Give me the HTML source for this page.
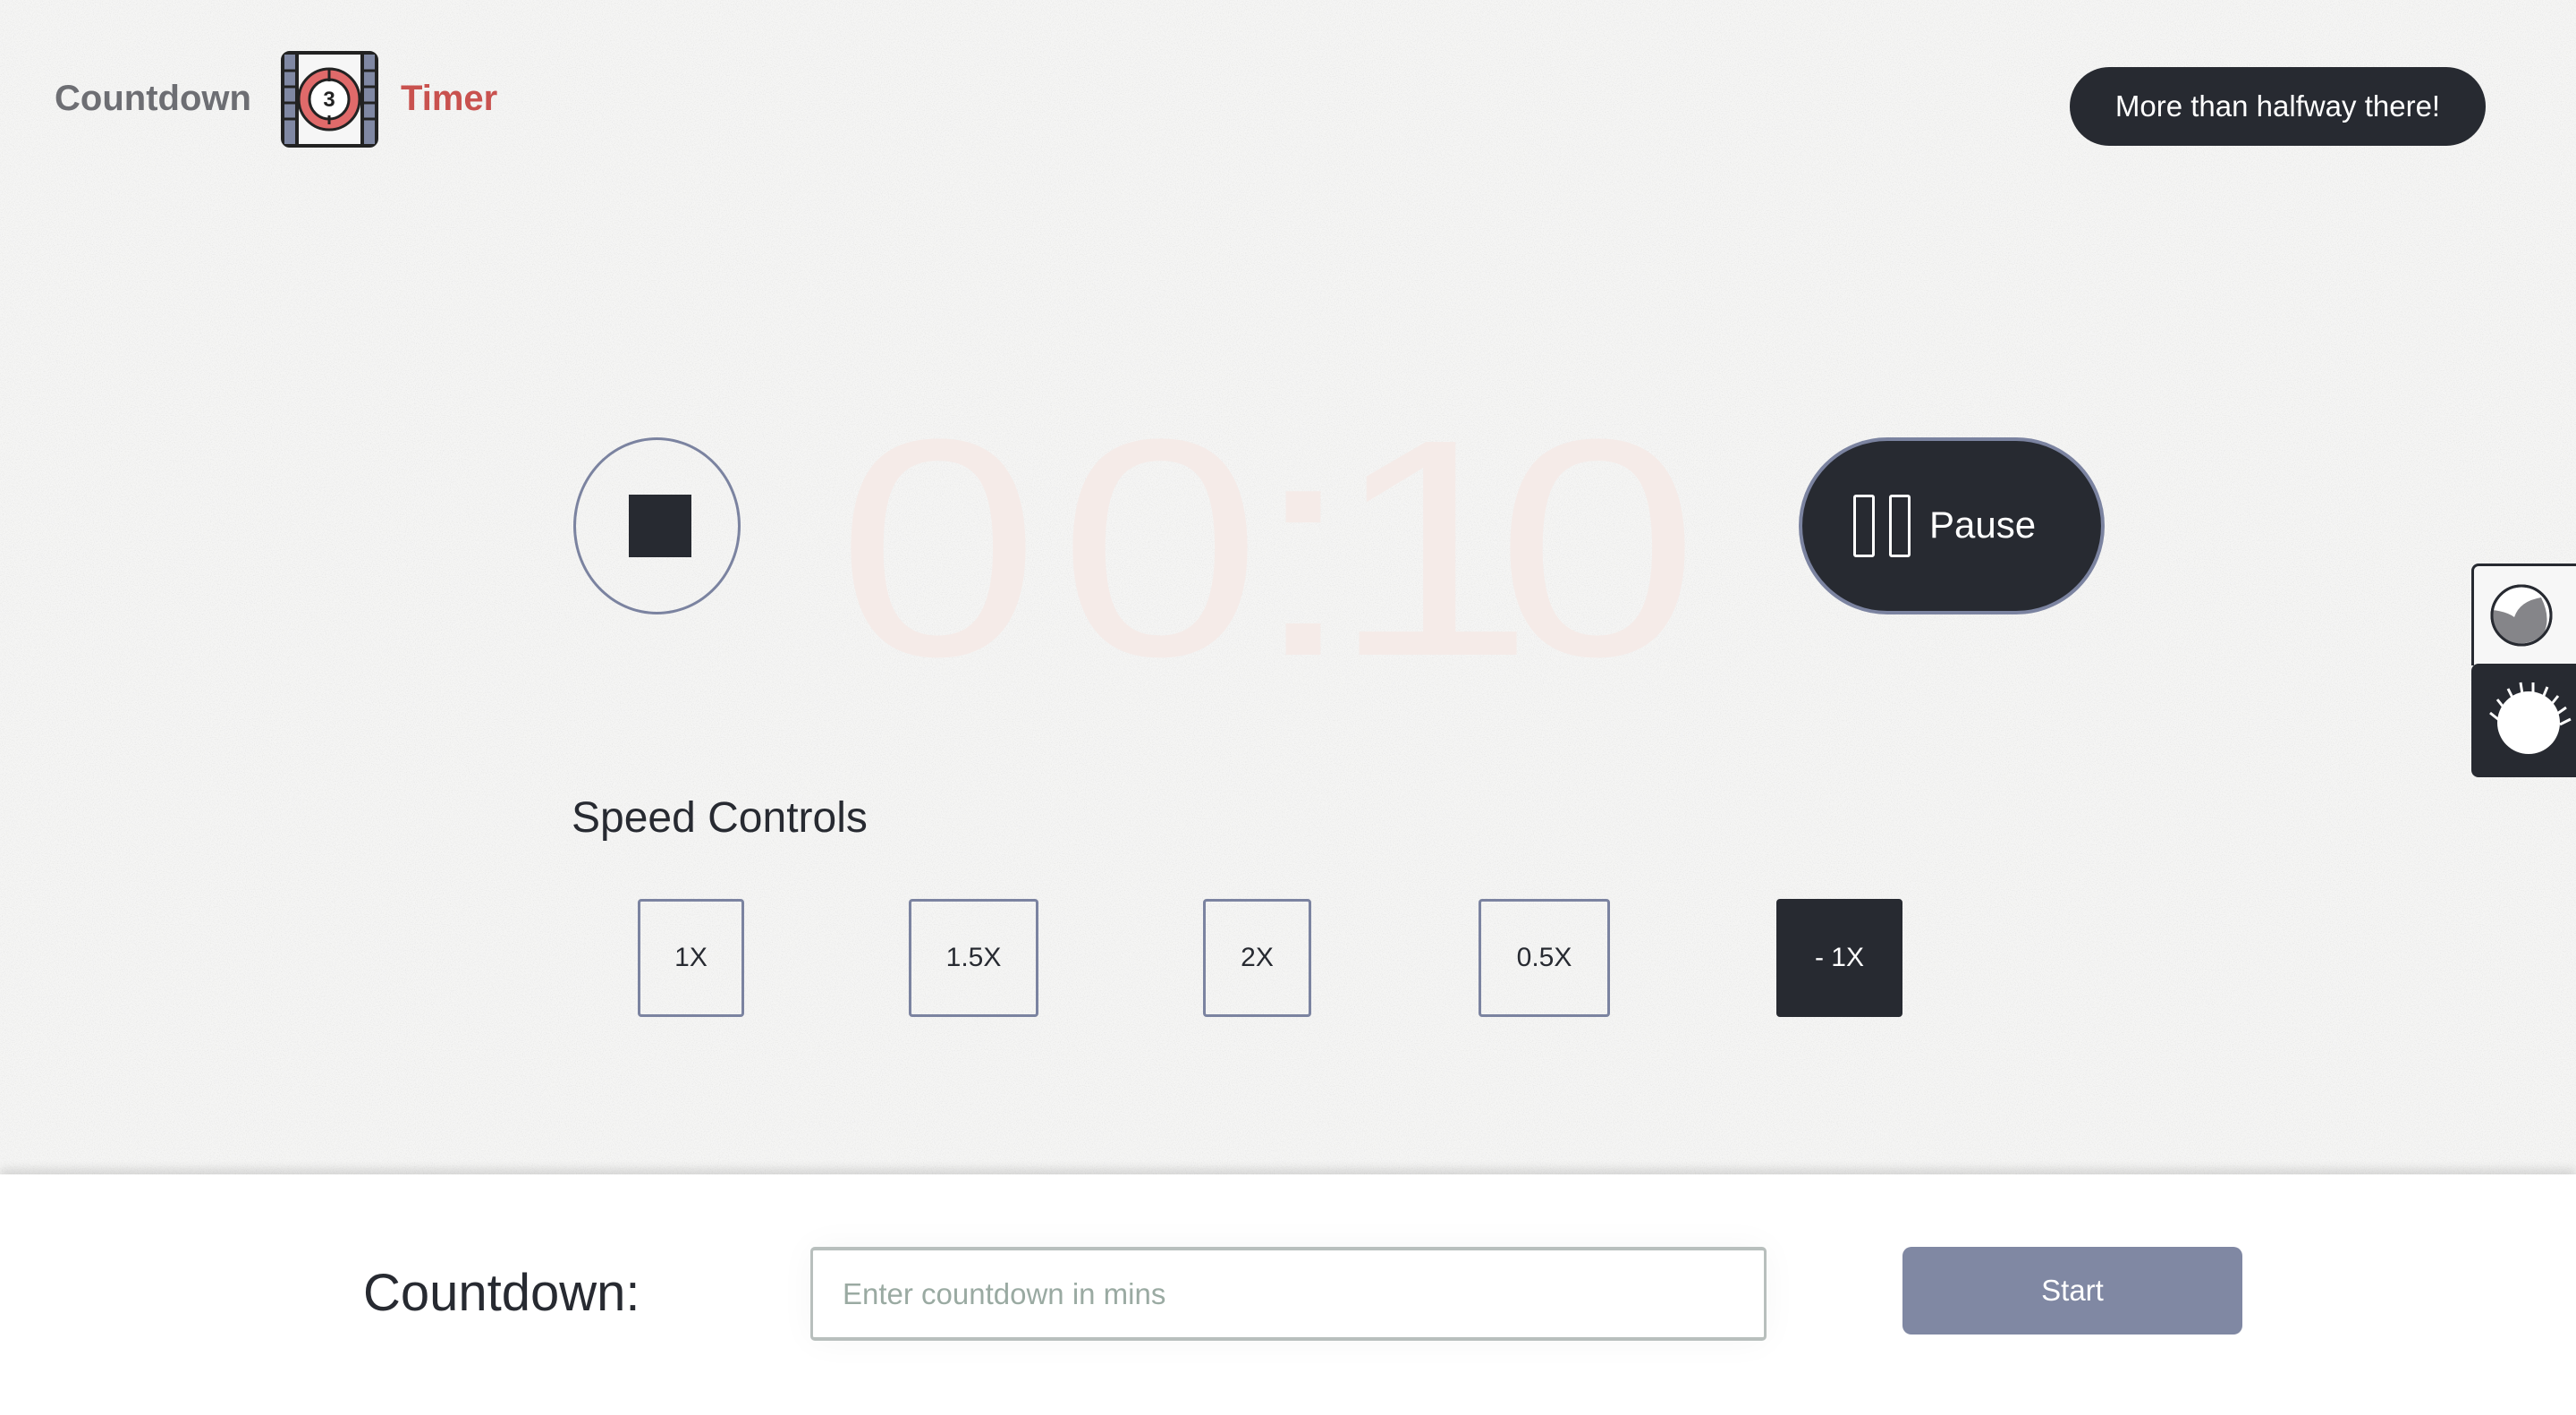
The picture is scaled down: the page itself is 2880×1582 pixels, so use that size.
<!DOCTYPE html>
<html><head><meta charset="utf-8">
<style>
*{margin:0;padding:0;box-sizing:border-box}
body{width:2880px;height:1582px;position:relative;overflow:hidden;background:#f5f5f4;font-family:"Liberation Sans",sans-serif;color:#272a31}
.a{position:absolute}
.sb{position:absolute;top:1005px;height:132px;border:3px solid #7b83a0;border-radius:4px;display:flex;align-items:center;justify-content:center;font-size:30px;color:#272a31}
.d{position:absolute;top:440px;width:300px;margin-left:-150px;text-align:center;font-size:346px;line-height:346px;color:#f5ebe8;transform:scaleX(1.18)}
</style></head><body>
<svg class="a" style="left:0;top:0" width="2880" height="1313">
<filter id="n"><feTurbulence type="fractalNoise" baseFrequency="0.9" numOctaves="2" seed="3"/><feColorMatrix values="0 0 0 0 0.6  0 0 0 0 0.6  0 0 0 0 0.6  0 0 0 -2.4 1.3"/></filter>
<rect width="2880" height="1313" filter="url(#n)" opacity="0.35"/>
</svg>
<div class="a" style="left:61px;top:88px;font-size:40px;font-weight:bold;color:#6d6e73">Countdown</div>
<svg class="a" style="left:314px;top:57px" width="109" height="108" viewBox="0 0 109 108">
<rect x="2" y="2" width="105" height="104" rx="8" fill="#f6f6f6" stroke="#222" stroke-width="4"/>
<rect x="4" y="4" width="14" height="100" fill="#8088a3"/><rect x="91" y="4" width="14" height="100" fill="#8088a3"/>
<line x1="18" y1="4" x2="18" y2="104" stroke="#222" stroke-width="4"/><line x1="91" y1="4" x2="91" y2="104" stroke="#222" stroke-width="4"/>
<g stroke="#222" stroke-width="3"><line x1="4" y1="22" x2="18" y2="22"/><line x1="4" y1="40" x2="18" y2="40"/><line x1="4" y1="58" x2="18" y2="58"/><line x1="4" y1="76" x2="18" y2="76"/><line x1="91" y1="22" x2="105" y2="22"/><line x1="91" y1="40" x2="105" y2="40"/><line x1="91" y1="58" x2="105" y2="58"/><line x1="91" y1="76" x2="105" y2="76"/></g>
<circle cx="54" cy="54" r="28" fill="none" stroke="#e06a6a" stroke-width="12"/>
<circle cx="54" cy="54" r="34" fill="none" stroke="#222" stroke-width="3"/>
<circle cx="54" cy="54" r="22" fill="#fff" stroke="#222" stroke-width="3"/>
<path d="M54 72v10M54 20v14" stroke="#222" stroke-width="3"/>
<text x="54" y="62" font-size="24" font-weight="bold" text-anchor="middle" fill="#222" font-family="Liberation Sans">3</text>
</svg>
<div class="a" style="left:448px;top:88px;font-size:40px;font-weight:bold;color:#c9524f">Timer</div>
<div class="a" style="left:2314px;top:75px;width:465px;height:88px;border-radius:44px;background:#272a31;color:#fff;font-size:33px;display:flex;align-items:center;justify-content:center">More than halfway there!</div>
<div class="a" style="left:641px;top:489px;width:187px;height:198px;border:3px solid #7b83a0;border-radius:50%"></div>
<div class="a" style="left:703px;top:553px;width:70px;height:70px;background:#272a31"></div>
<div class="d" style="left:1049px">0</div>
<div class="d" style="left:1297px">0</div>
<div class="d" style="left:1457px">:</div>
<div class="d" style="left:1602px">1</div>
<div class="d" style="left:1786px">0</div>
<div class="a" style="left:2011px;top:489px;width:342px;height:198px;border:4px solid #7b83a0;border-radius:99px;background:#272a31"></div>
<div class="a" style="left:2072px;top:553px;width:24px;height:70px;border:3px solid #fff;border-radius:3px"></div>
<div class="a" style="left:2112px;top:553px;width:24px;height:70px;border:3px solid #fff;border-radius:3px"></div>
<div class="a" style="left:2157px;top:563px;font-size:42px;color:#fff">Pause</div>
<div class="a" style="left:2763px;top:630px;width:130px;height:114px;border:3px solid #272a31;border-right:none;border-bottom:none;border-radius:8px 0 0 0;background:#f7f7f7"></div>
<svg class="a" style="left:2783px;top:652px" width="72" height="72" viewBox="0 0 72 72"><circle cx="36" cy="36" r="33" fill="#fff" stroke="#272a31" stroke-width="3"/><path d="M4 30 Q20 32 28 38 Q34 20 58 16 Q70 40 60 58 Q36 76 12 60 Q2 48 4 30Z" fill="#858589"/><circle cx="36" cy="36" r="33" fill="none" stroke="#272a31" stroke-width="3"/></svg>
<div class="a" style="left:2763px;top:742px;width:130px;height:127px;background:#272a31;border-radius:8px 0 0 8px"></div>
<svg class="a" style="left:2780px;top:760px" width="100" height="100" viewBox="0 0 100 100"><circle cx="47" cy="48" r="35" fill="#fff"/><g stroke="#fff" stroke-width="3"><path d="M30 22l-6-12M40 16l-2-13M52 16l0-13M63 20l5-12M72 28l8-10M79 38l10-7M82 50l12-6M20 32l-8-10M14 45l-10-8"/></g></svg>
<div class="a" style="left:639px;top:887px;font-size:48px;color:#272a31">Speed Controls</div>
<div class="sb" style="left:713px;width:119px">1X</div>
<div class="sb" style="left:1016px;width:145px">1.5X</div>
<div class="sb" style="left:1345px;width:121px">2X</div>
<div class="sb" style="left:1653px;width:147px">0.5X</div>
<div class="sb" style="left:1986px;width:141px;background:#272a31;border-color:#272a31;color:#fff">- 1X</div>
<div class="a" style="left:0;top:1313px;width:2880px;height:269px;background:#fff;box-shadow:0 -6px 10px rgba(0,0,0,0.12)"></div>
<div class="a" style="left:406px;top:1412px;font-size:58px;color:#272a31">Countdown:</div>
<div class="a" style="left:906px;top:1394px;width:1069px;height:105px;border:3px solid #b8bfbd;border-top-width:4px;border-bottom-width:4px;border-radius:5px;background:#fff;box-shadow:0 0 40px rgba(0,0,0,0.04)"></div>
<div class="a" style="left:942px;top:1428px;font-size:33px;color:#9aaaa2">Enter countdown in mins</div>
<div class="a" style="left:2127px;top:1394px;width:380px;height:98px;background:#8088a3;border-radius:10px;color:#fff;font-size:33px;display:flex;align-items:center;justify-content:center">Start</div>
</body></html>
